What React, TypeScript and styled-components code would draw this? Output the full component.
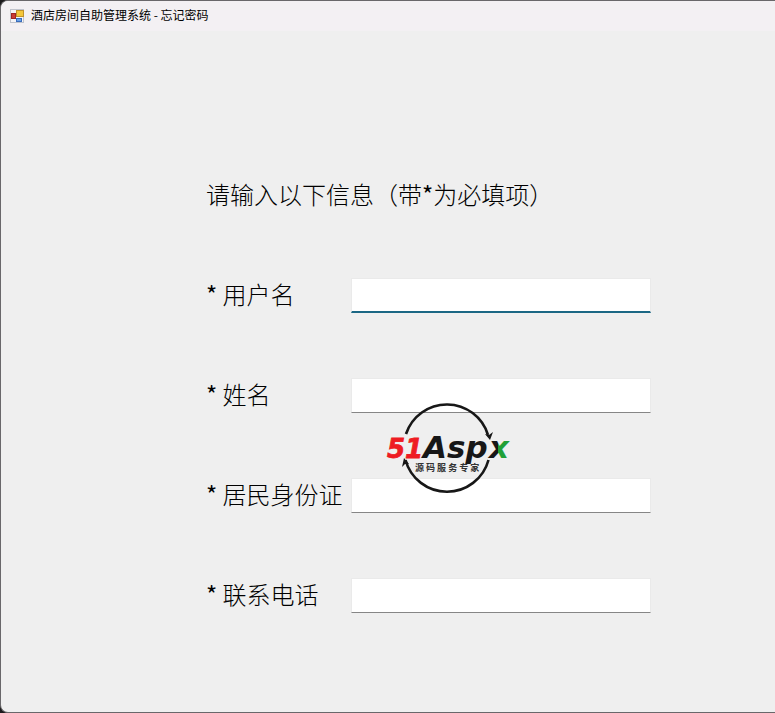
import React from "react";
import styled, { createGlobalStyle, css } from "styled-components";

const GlobalStyle = createGlobalStyle`
  * { box-sizing: border-box; }
  html, body, #root { height: 100%; margin: 0; }
  body {
    background: #1c1a1c;
    color: #000;
    font-family: "Noto Sans CJK SC", sans-serif;
  }
`;

const Window = styled.div`
  position: relative;
  display: flex;
  flex-direction: column;
  min-height: 100%;
  overflow: hidden;
  background: #efefef;
  border: 1px solid #69676a;
  border-right: 0;
  border-radius: 8px 0 0 8px;
`;

const TitleBar = styled.header`
  display: flex;
  align-items: center;
  gap: 6px;
  height: 30px;
  padding-left: 9px;
  background: #f3f0f3;
`;

const Title = styled.h1`
  margin: 0;
  padding-bottom: 2px;
  font-size: 12px;
  line-height: 18px;
  font-weight: 400;
`;

const Form = styled.form`
  position: relative;
  display: flex;
  flex-direction: column;
  gap: 64px;
  padding: 146px 124px 99px 205px;
`;

const Prompt = styled.p`
  margin: 0;
  padding-bottom: 2px;
  font-size: 24px;
  line-height: 34px;
  font-weight: 300;
`;

const Field = styled.div`
  display: grid;
  grid-template-columns: 145px minmax(0, 1fr);
  align-items: end;
  height: 36px;
`;

const Label = styled.label`
  padding-bottom: 2px;
  font-size: 24px;
  line-height: 34px;
  font-weight: 300;
  white-space: nowrap;
`;

const Mark = styled.span`
  font-weight: 400;
`;

const Input = styled.input<{ $active?: boolean }>`
  width: 100%;
  height: 35px;
  padding: 4px 6px;
  border: 1px solid #eaeaea;
  border-bottom-color: #868686;
  background: #fff;
  font: inherit;
  font-size: 20px;
  outline: none;
  ${(p) => p.$active && css`border-bottom: 2px solid #1b6784;`}
`;

const Logo = styled.svg`
  position: absolute;
  left: 383px;
  top: 370px;
  width: 132px;
  height: 96px;
  pointer-events: none;
`;

const AppIcon = () => (
  <svg width="15" height="15" viewBox="0 0 15 15" aria-hidden="true">
    <rect x="0.5" y="0.5" width="13" height="13" fill="#f4f4f7" stroke="#c0c3cc" />
    <rect x="6.5" y="1.5" width="7" height="6" fill="#f4c63a" stroke="#c0922b" />
    <rect x="1.5" y="4.5" width="4" height="5" fill="#c93a35" stroke="#9d2424" />
    <rect x="6.5" y="9.5" width="5" height="3" fill="#6aa2e8" stroke="#3a6cbc" />
  </svg>
);

const Brand = () => (
  <Logo viewBox="0 0 132 96" role="img" aria-label="51Aspx 源码服务专家">
    <defs>
      <linearGradient id="cross" x1="0" x2="1" y1="0" y2="0">
        <stop offset="0.5" stopColor="#171717" />
        <stop offset="0.5" stopColor="#21a038" />
      </linearGradient>
    </defs>
    <g fill="none" stroke="#171717" strokeWidth="2.6">
      <path d="M22 33A43 43 0 0 1 104 34" />
      <path d="M21.5 59A43 43 0 0 0 104.5 59" />
    </g>
    <path d="M101 33L105 34L109 31L106 39ZM18 66L20 57L25 63L21 63Z" fill="#171717" />
    <g fontFamily="DejaVu Sans, sans-serif" fontWeight="700" fontStyle="italic">
      <text x="3" y="57" fontSize="26" fill="#ee1c23" stroke="#ee1c23" strokeWidth="0.8">51</text>
      <text x="39" y="57" fontSize="31" fill="#171717">Asp</text>
      <text x="105" y="57" fontSize="31" fill="url(#cross)">x</text>
    </g>
    <text x="31" y="70" fontSize="9" fontWeight="700" fill="#333" fontFamily="Noto Sans CJK SC, sans-serif">源 码 服 务 专 家</text>
  </Logo>
);

const fields = [
  { id: "username", label: "用户名", active: true },
  { id: "fullname", label: "姓名" },
  { id: "identity", label: "居民身份证" },
  { id: "phone", label: "联系电话" },
];

export default function App() {
  return (
    <>
      <GlobalStyle />
      <Window>
        <TitleBar>
          <AppIcon />
          <Title>酒店房间自助管理系统 - 忘记密码</Title>
        </TitleBar>
        <Form>
          <Prompt>请输入以下信息（带<Mark>*</Mark>为必填项）</Prompt>
          {fields.map((f) => (
            <Field key={f.id}>
              <Label htmlFor={f.id}><Mark>*</Mark> {f.label}</Label>
              <Input id={f.id} type="text" $active={f.active} required />
            </Field>
          ))}
          <Brand />
        </Form>
      </Window>
    </>
  );
}
